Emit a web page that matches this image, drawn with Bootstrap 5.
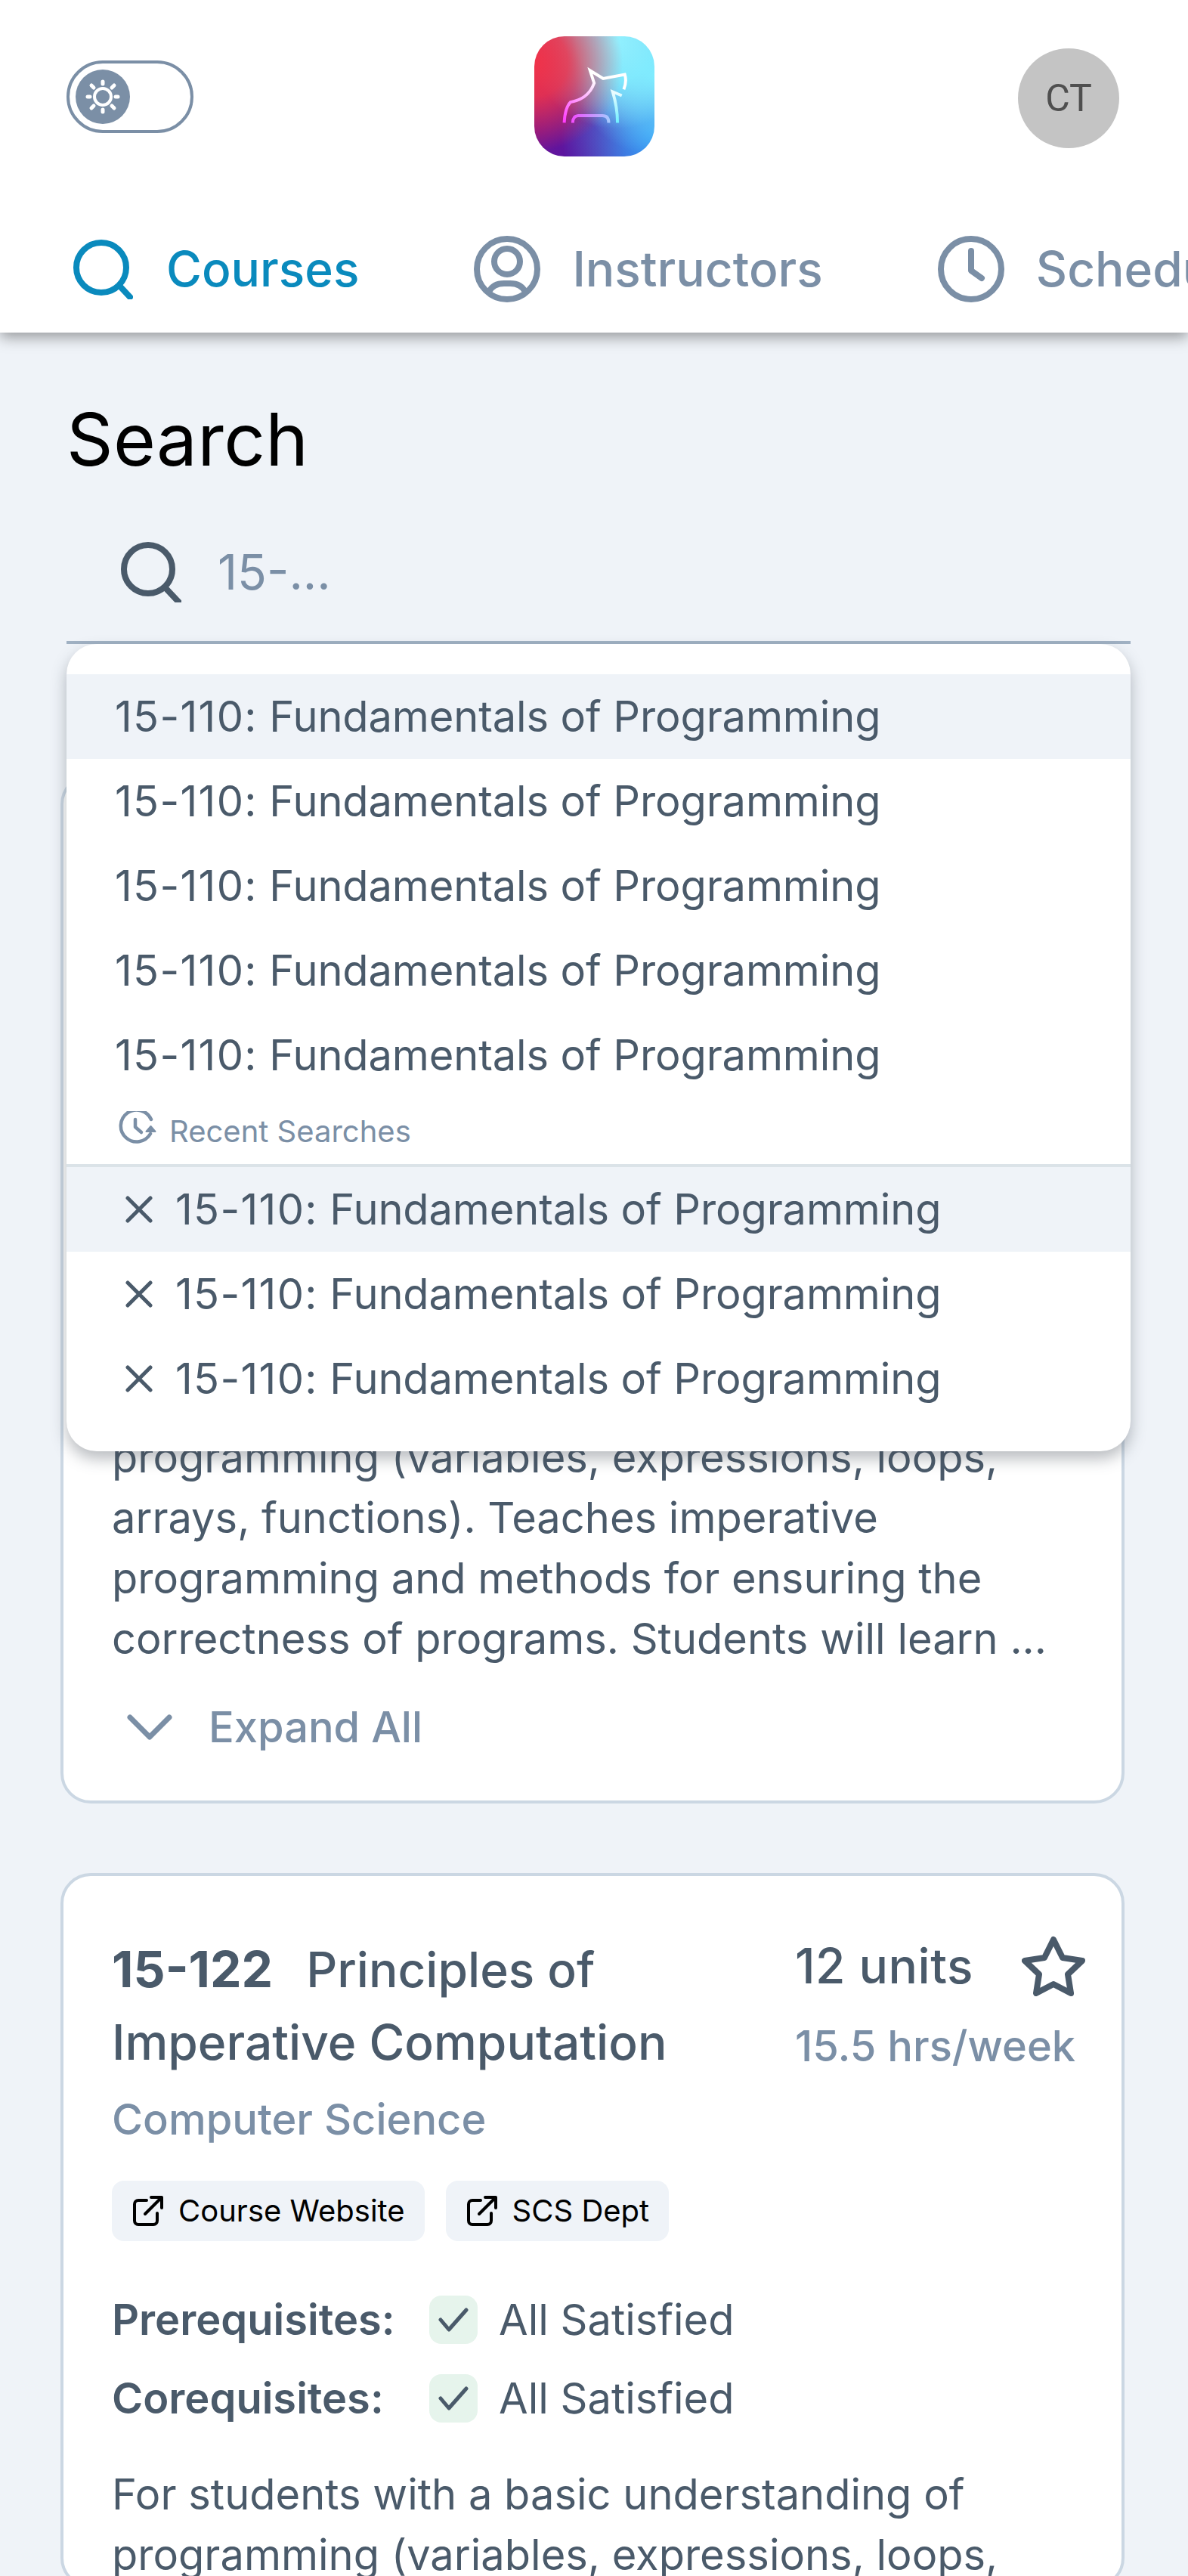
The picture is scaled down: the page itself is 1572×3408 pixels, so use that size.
<!DOCTYPE html>
<html lang="en">
<head>
    <meta charset="UTF-8">
    <meta name="viewport" content="width=device-width, initial-scale=1.0">
    <title>Search</title>
    <link href="https://cdn.jsdelivr.net/npm/bootstrap@5.3.0/dist/css/bootstrap.min.css" rel="stylesheet">
    <style>
        html, body { height: 100%; overflow: hidden; }
        body { background: #eff3f8; font-family: Inter, "Liberation Sans", sans-serif; color: #4a5a6a; }

        .app-head { background: #fff; height: 440px; box-shadow: 0 6px 18px rgba(0, 0, 0, .38); position: relative; z-index: 3; overflow: hidden; }
        .top-row { padding: 48px 91px 0 91px; height: 312px; }
        .top-side { flex: 1 1 0; }

        .theme-switch { width: 168px; height: 96px; border: 4px solid #7b8fa6; border-radius: 48px; padding: 8px; margin: 32px 0 0 -3px; }
        .theme-knob { width: 72px; height: 72px; display: block; }
        .app-logo { width: 159px; height: 159px; border-radius: 40px; display: block; flex: none;
            background:
                radial-gradient(circle at 0% 22%, #f0334a 0, rgba(240, 51, 74, .85) 22%, rgba(240, 51, 74, 0) 58%),
                radial-gradient(circle at 68% 4%, #92f1ff 0, rgba(130, 238, 255, .9) 28%, rgba(130, 238, 255, 0) 62%),
                radial-gradient(circle at 100% 32%, #7ae8ff 0, rgba(122, 232, 255, 0) 55%),
                radial-gradient(circle at 100% 82%, #3aa0f5 0, rgba(58, 160, 245, 0) 60%),
                radial-gradient(circle at 30% 100%, #5a14a0 0, rgba(90, 20, 160, 0) 55%),
                radial-gradient(circle at 5% 78%, #8a0f84 0, rgba(138, 15, 132, 0) 60%),
                linear-gradient(135deg, #b03070 0, #5230b0 60%, #2c62e0 100%); }
        .user-chip { width: 134px; height: 132px; border-radius: 50%; background: #c4c4c4; color: #4f4f4f; font-family: Roboto, sans-serif; font-size: 50px; margin-top: 16px; }

        .tab-row { padding-left: 96px; gap: 152px; height: 128px; white-space: nowrap; }
        .tab-item { font-size: 64px; font-weight: 500; color: #7b8fa6; gap: 42px; height: 88px; }
        .tab-item.is-on { color: #0a8abd; gap: 44px; }
        .tab-item svg { width: 88px; height: 88px; flex: none; }
        .tab-item.is-on svg { width: 80px; height: 80px; }

        .page-main { padding: 0 84px 0 80px; }
        .page-title { font-size: 96px; font-weight: 400; letter-spacing: .3px; color: #000; margin: 0; padding: 83px 0 0 8px; line-height: 116px; }

        .search-wrap { margin: 0 -8px 0 8px; position: relative; z-index: 2; }
        .search-line { height: 187px; margin-top: 26px; padding: 0 0 0 72px; gap: 48px; border-bottom: 4px solid #a0b1c3; }
        .search-line svg { width: 80px; height: 80px; flex: none; }
        .search-input { font-size: 64px; color: #7b8fa6; }

        .suggest-box { position: absolute; left: 0; right: 0; top: 100%; height: 1068px; background: #fff; border-radius: 40px; padding-top: 40px; box-shadow: 0 10px 20px rgba(60, 70, 80, .36); }
        .suggest-row { height: 112px; padding-left: 64px; font-size: 56px; letter-spacing: -.12px; display: flex; align-items: center; gap: 30px; white-space: pre; }
        .suggest-row.is-hover { background: #eff3f8; }
        .suggest-row.has-x { padding-left: 78px; }
        .suggest-row svg { width: 36px; height: 36px; flex: none; }
        .code-num { letter-spacing: 1.3px; }
        .recent-head { height: 88px; padding-left: 68px; gap: 16px; font-size: 40px; color: #7b8fa6; border-bottom: 4px solid #dbe3e8; box-sizing: content-box; }
        .recent-head svg { width: 52px; height: 52px; flex: none; }
        .recent-head span { padding-top: 2px; }

        .course-box { background: #fff; border: 4px solid #cbd7e3; border-radius: 40px; padding: 75px 60px 0 64px; margin-bottom: 92px; }
        .first-box { margin-top: 172px; height: 1362px; }
        .title-line { font-size: 64px; line-height: 96px; margin: 0; font-weight: 500; width: 820px; color: #4a5a6a; }
        .title-line b { font-weight: 700; font-size: 66px; margin-right: 44px; }
        .unit-col { width: 384px; margin: -4px -12px 0 0; }
        .unit-top { font-size: 64px; font-weight: 500; line-height: 96px; letter-spacing: .5px; }
        .unit-top svg { width: 84px; height: 80px; flex: none; }
        .unit-hrs { font-size: 56px; font-weight: 500; color: #7b8fa6; line-height: 80px; margin-top: 18px; white-space: nowrap; }
        .dept-name { font-size: 56px; font-weight: 500; color: #7b8fa6; line-height: 80px; margin-top: 14px; }
        .chip-row { gap: 28px; margin: 41px 0 52px; }
        .link-chip { height: 80px; background: #eff3f8; border-radius: 16px; padding: 0 26px 0 28px; gap: 20px; font-size: 40px; color: #000; }
        .link-chip svg { width: 40px; height: 40px; flex: none; }
        .req-row { height: 104px; font-size: 56px; }
        .req-name { font-weight: 600; width: 420px; }
        .req-check { width: 64px; height: 64px; background: #e6f4ec; border-radius: 16px; margin-right: 28px; }
        .req-check svg { width: 40px; height: 32px; }
        .course-text { font-size: 56px; line-height: 80px; margin: 0; }
        .req-row + .course-text { margin-top: 35px; }
        .expand-row { font-size: 56px; font-weight: 500; color: #7b8fa6; gap: 48px; padding-left: 20px; height: 128px; margin: 13px 0 33px; }
        .expand-row svg { width: 60px; height: 36px; flex: none; }
    </style>
</head>
<body>
    <header class="app-head">
        <div class="top-row d-flex align-items-start">
            <div class="top-side">
                <div class="theme-switch d-flex align-items-center">
                    <svg class="theme-knob" viewBox="0 0 72 72">
                        <circle cx="36" cy="36" r="36" fill="#7b8fa6"/>
                        <circle cx="36" cy="36" r="11" fill="none" stroke="#fff" stroke-width="4"/>
                        <path stroke="#fff" stroke-width="5" stroke-linecap="round" d="M36 16v3M36 53v3M16 36h3M53 36h3M21 21l3 3M48 48l3 3M21 51l3-3M48 24l3-3"/>
                    </svg>
                </div>
            </div>
            <svg class="app-logo" viewBox="84 54 478 478">
                <defs>
                    <linearGradient id="dogA" gradientUnits="userSpaceOnUse" x1="200" y1="390" x2="330" y2="230">
                        <stop offset="0" stop-color="#ff3cff"/><stop offset="1" stop-color="#ffffff"/>
                    </linearGradient>
                    <linearGradient id="dogB" gradientUnits="userSpaceOnUse" x1="400" y1="280" x2="415" y2="398">
                        <stop offset="0" stop-color="#eafcff"/><stop offset="1" stop-color="#6ff0ff"/>
                    </linearGradient>
                    <linearGradient id="dogC" gradientUnits="userSpaceOnUse" x1="237" y1="380" x2="380" y2="380">
                        <stop offset="0" stop-color="#f050ff"/><stop offset="1" stop-color="#a8c8ff"/>
                    </linearGradient>
                </defs>
                <g fill="none" stroke-width="12">
                    <path stroke="url(#dogA)" d="M203 398C205 360 214 330 228 316C262 310 305 290 322 240L306 190L358 222L444 206C450 225 448 245 440 265"/>
                    <path stroke="url(#dogB)" d="M432 290L396 275C408 315 415 355 415 398"/>
                    <path stroke="url(#dogC)" d="M237 398C237 380 245 370 260 370H355C372 370 380 380 380 398"/>
                </g>
            </svg>
            <div class="top-side d-flex justify-content-end">
                <div class="user-chip d-flex align-items-center justify-content-center">CT</div>
            </div>
        </div>
        <nav class="tab-row d-flex align-items-start">
            <div class="tab-item is-on d-flex align-items-center">
                <svg viewBox="0 0 80 80" fill="none" stroke="currentColor" stroke-width="8" stroke-linecap="round"><circle cx="38" cy="38" r="33"/><path d="M62 62l14 15"/></svg>
                <span>Courses</span>
            </div>
            <div class="tab-item d-flex align-items-center">
                <svg viewBox="0 0 88 88" fill="none" stroke="currentColor" stroke-width="8" stroke-linecap="round"><circle cx="44" cy="44" r="40"/><circle cx="44" cy="34" r="17"/><path d="M20 74c4-8 12-11 20-11h8c8 0 16 3 20 11"/></svg>
                <span>Instructors</span>
            </div>
            <div class="tab-item d-flex align-items-center">
                <svg viewBox="0 0 88 88" fill="none" stroke="currentColor" stroke-width="8" stroke-linecap="round" stroke-linejoin="round"><circle cx="44" cy="44" r="40"/><path d="M44 20v26l14 10"/></svg>
                <span>Schedule</span>
            </div>
        </nav>
    </header>

    <main class="page-main">
        <h1 class="page-title">Search</h1>

        <div class="search-wrap">
            <div class="search-line d-flex align-items-center">
                <svg viewBox="0 0 80 80" fill="none" stroke="#4a5a6a" stroke-width="8" stroke-linecap="round"><circle cx="36" cy="36" r="32"/><path d="M60 62l17 18"/></svg>
                <span class="search-input">15-...</span>
            </div>
            <div class="suggest-box">
                <div class="suggest-row is-hover"><span><span class="code-num">15-110:</span> Fundamentals of Programming</span></div>
                <div class="suggest-row"><span><span class="code-num">15-110:</span> Fundamentals of Programming</span></div>
                <div class="suggest-row"><span><span class="code-num">15-110:</span> Fundamentals of Programming</span></div>
                <div class="suggest-row"><span><span class="code-num">15-110:</span> Fundamentals of Programming</span></div>
                <div class="suggest-row"><span><span class="code-num">15-110:</span> Fundamentals of Programming</span></div>
                <div class="recent-head d-flex align-items-center">
                    <svg viewBox="0 0 52 52" fill="none" stroke="#7b8fa6" stroke-width="4.500" stroke-linecap="round" stroke-linejoin="round"><path d="M44 11A21 21 0 1 0 43 30"/><path d="M23 11v10l8 7"/><path d="M43.500 20l6 7h-12z" fill="#7b8fa6" stroke-width="2"/></svg>
                    <span>Recent Searches</span>
                </div>
                <div class="suggest-row has-x is-hover"><svg viewBox="0 0 36 36" stroke="#4a5a6a" stroke-width="5" stroke-linecap="round"><path d="M3 3l30 30M33 3L3 33"/></svg><span><span class="code-num">15-110:</span> Fundamentals of Programming</span></div>
                <div class="suggest-row has-x"><svg viewBox="0 0 36 36" stroke="#4a5a6a" stroke-width="5" stroke-linecap="round"><path d="M3 3l30 30M33 3L3 33"/></svg><span><span class="code-num">15-110:</span> Fundamentals of Programming</span></div>
                <div class="suggest-row has-x"><svg viewBox="0 0 36 36" stroke="#4a5a6a" stroke-width="5" stroke-linecap="round"><path d="M3 3l30 30M33 3L3 33"/></svg><span><span class="code-num">15-110:</span> Fundamentals of Programming</span></div>
            </div>
        </div>

        <section class="course-box first-box d-flex flex-column justify-content-end">
            <p class="course-text">programming (variables, expressions, loops, arrays, functions). Teaches imperative programming and methods for ensuring the correctness of programs. Students will learn ...</p>
            <div class="expand-row d-flex align-items-center">
                <svg viewBox="0 0 60 36" fill="none" stroke="#7b8fa6" stroke-width="7" stroke-linecap="round" stroke-linejoin="round"><path d="M4 5l26 26L56 5"/></svg>
                <span>Expand All</span>
            </div>
        </section>

        <section class="course-box">
            <div class="d-flex justify-content-between">
                <h2 class="title-line"><b>15-122</b>Principles of Imperative Computation</h2>
                <div class="unit-col">
                    <div class="unit-top d-flex justify-content-between align-items-center">
                        <span>12 units</span>
                        <svg viewBox="0 0 84 80" fill="none" stroke="#4a5a6a" stroke-width="8" stroke-linejoin="round"><path d="M42 5L54 29L80 33L61 51L65 76L42 64L19 76L23 51L4 33L30 29Z"/></svg>
                    </div>
                    <div class="unit-hrs">15.5 hrs/week</div>
                </div>
            </div>
            <div class="dept-name">Computer Science</div>
            <div class="chip-row d-flex">
                <div class="link-chip d-flex align-items-center">
                    <svg viewBox="0 0 40 40" fill="none" stroke="#000" stroke-width="4" stroke-linecap="round" stroke-linejoin="round"><path d="M18 6H7a5 5 0 0 0-5 5v22a5 5 0 0 0 5 5h20a5 5 0 0 0 5-5V23"/><path d="M16 24L37 3M24 2h14v14"/></svg>
                    <span>Course Website</span>
                </div>
                <div class="link-chip d-flex align-items-center">
                    <svg viewBox="0 0 40 40" fill="none" stroke="#000" stroke-width="4" stroke-linecap="round" stroke-linejoin="round"><path d="M18 6H7a5 5 0 0 0-5 5v22a5 5 0 0 0 5 5h20a5 5 0 0 0 5-5V23"/><path d="M16 24L37 3M24 2h14v14"/></svg>
                    <span>SCS Dept</span>
                </div>
            </div>
            <div class="req-row d-flex align-items-center">
                <span class="req-name">Prerequisites:</span>
                <span class="req-check d-flex align-items-center justify-content-center"><svg viewBox="0 0 40 32" fill="none" stroke="#4a5a6a" stroke-width="5" stroke-linecap="round" stroke-linejoin="round"><path d="M3 16l11 13L37 3"/></svg></span>
                <span>All Satisfied</span>
            </div>
            <div class="req-row d-flex align-items-center">
                <span class="req-name">Corequisites:</span>
                <span class="req-check d-flex align-items-center justify-content-center"><svg viewBox="0 0 40 32" fill="none" stroke="#4a5a6a" stroke-width="5" stroke-linecap="round" stroke-linejoin="round"><path d="M3 16l11 13L37 3"/></svg></span>
                <span>All Satisfied</span>
            </div>
            <p class="course-text">For students with a basic understanding of programming (variables, expressions, loops,</p>
        </section>
    </main>

    <script src="https://cdn.jsdelivr.net/npm/bootstrap@5.3.0/dist/js/bootstrap.bundle.min.js"></script>
</body>
</html>
